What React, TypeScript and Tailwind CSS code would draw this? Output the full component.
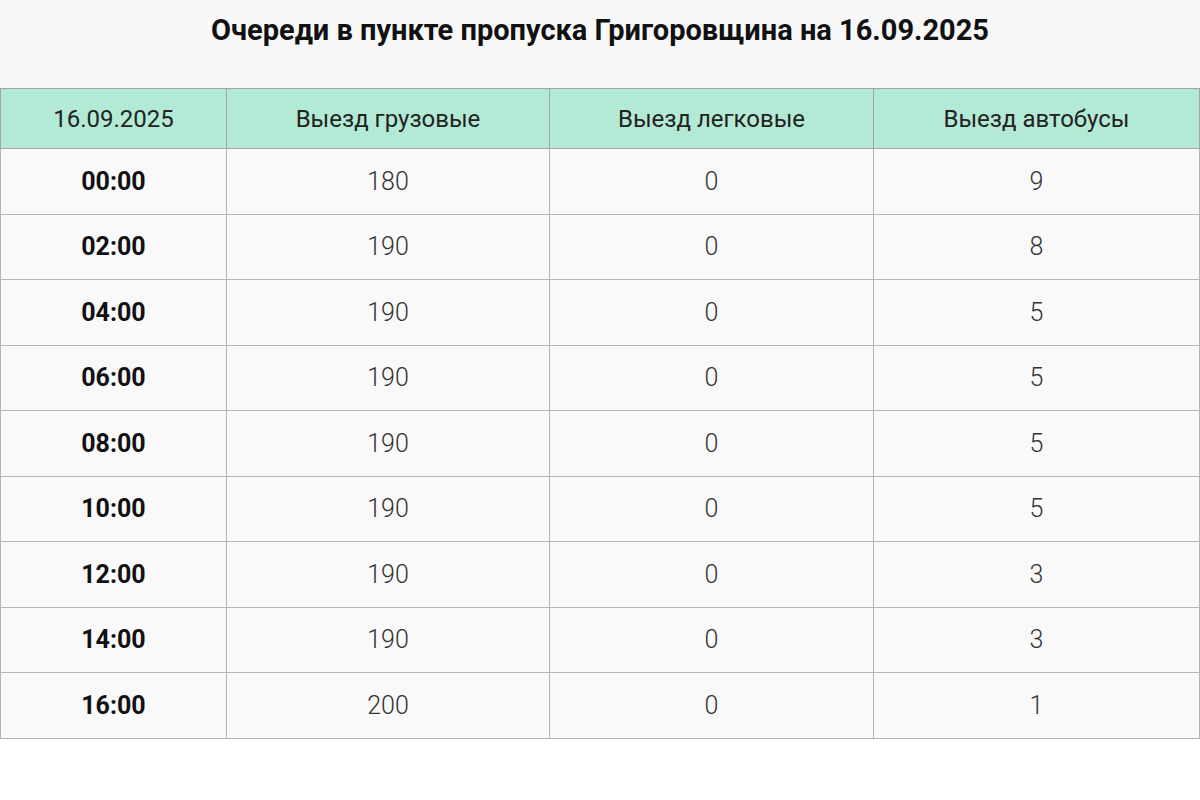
const rows: Array<[string, number, number, number]> = [
  ['00:00', 180, 0, 9],
  ['02:00', 190, 0, 8],
  ['04:00', 190, 0, 5],
  ['06:00', 190, 0, 5],
  ['08:00', 190, 0, 5],
  ['10:00', 190, 0, 5],
  ['12:00', 190, 0, 3],
  ['14:00', 190, 0, 3],
  ['16:00', 200, 0, 1]
];

export default function App() {
  return (
    <div className="min-h-[800px] bg-white" style={{ fontFamily: 'Roboto, "Liberation Sans", sans-serif' }}>
      <div className="flex h-[88px] items-start justify-center bg-[#f8f8f8] pt-[13px]">
        <h1 className="text-[29px] font-bold leading-[34px] text-[#111]">
          Очереди в пункте пропуска Григоровщина на 16.09.2025
        </h1>
      </div>
      <table className="w-[1200px] table-fixed border-collapse bg-[#f9f9f9]">
        <colgroup>
          <col className="w-[226px]" />
          <col className="w-[323px]" />
          <col className="w-[324px]" />
          <col />
        </colgroup>
        <thead>
          <tr className="h-[60px] bg-[#b3ead5] text-[24px] text-[#222]">
            <th className="border border-[#a4a4a4] font-normal">16.09.2025</th>
            <th className="border border-[#a4a4a4] font-normal">Выезд грузовые</th>
            <th className="border border-[#a4a4a4] font-normal">Выезд легковые</th>
            <th className="border border-[#a4a4a4] font-normal">Выезд автобусы</th>
          </tr>
        </thead>
        <tbody>
          {rows.map(([time, trucks, cars, buses]) => (
            <tr key={time} className="h-[65.5px] text-center text-[25px]">
              <td className="border border-[#b4b4b4] font-bold text-[#111]">{time}</td>
              <td className="border border-[#b4b4b4] font-light text-[#333]">{trucks}</td>
              <td className="border border-[#b4b4b4] font-light text-[#333]">{cars}</td>
              <td className="border border-[#b4b4b4] font-light text-[#333]">{buses}</td>
            </tr>
          ))}
        </tbody>
      </table>
    </div>
  );
}
